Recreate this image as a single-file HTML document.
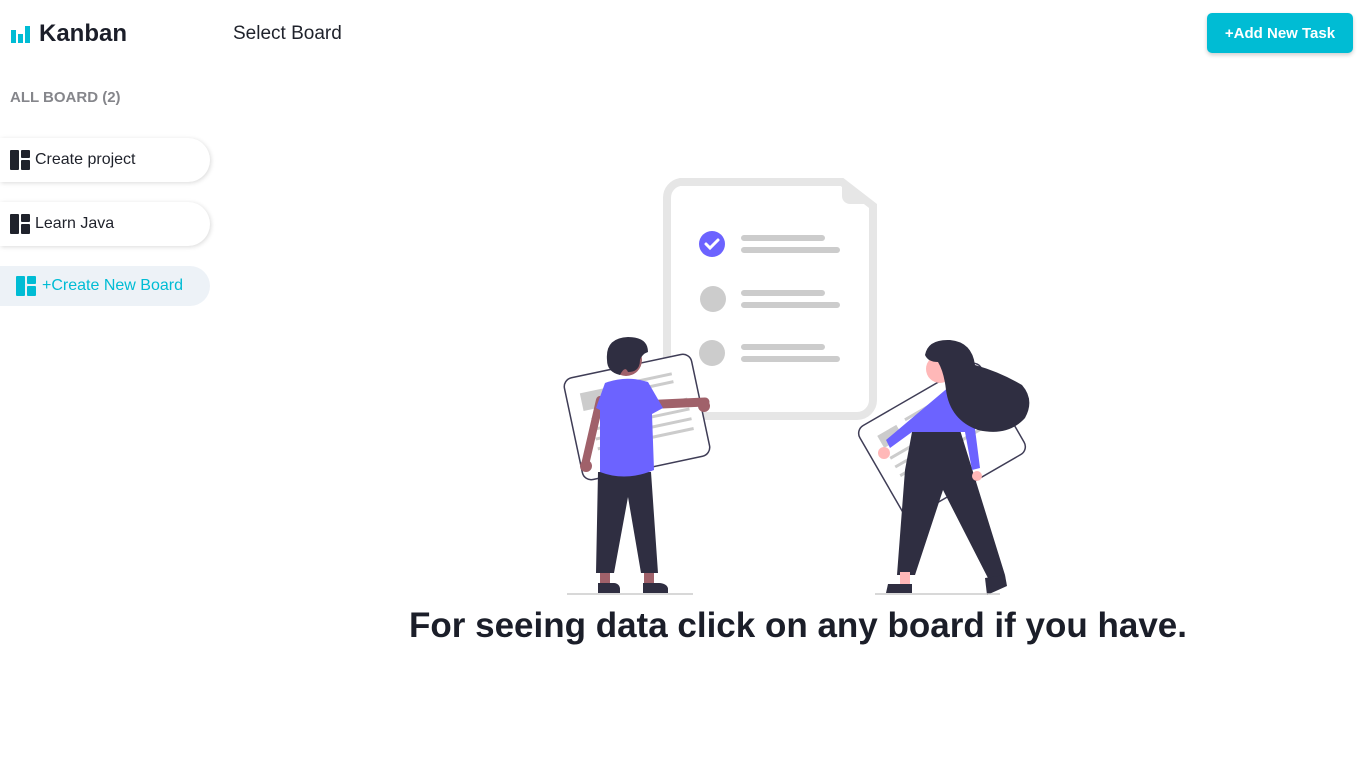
<!DOCTYPE html>
<html><head><meta charset="utf-8"><style>
*{margin:0;padding:0;box-sizing:border-box}
body{width:1366px;height:761px;background:#fff;font-family:"Liberation Sans",sans-serif;position:relative;overflow:hidden;color:#1f222b}
.logo{position:absolute;left:11px;top:20px;display:flex;align-items:center;font-weight:bold;font-size:24px;color:#1b1e29}
.logo svg{margin-right:8px}
.title{position:absolute;left:233px;top:23px;font-size:19px;color:#1f222b}
.btn{position:absolute;left:1207px;top:13px;width:146px;height:40px;background:#00bcd4;border-radius:5px;color:#fff;font-size:15px;font-weight:bold;display:flex;align-items:center;justify-content:center;box-shadow:0 2px 4px rgba(0,0,0,.2)}
.all{position:absolute;left:10px;top:89px;font-size:15px;font-weight:bold;color:#85868b}
.item{position:absolute;left:0;width:210px;height:44px;border-radius:0 22px 22px 0;background:#fff;box-shadow:1px 1px 5px rgba(0,0,0,.15);display:flex;align-items:center;padding-left:10px;font-size:16px;color:#1f222b}
.item svg{margin-right:5px}
.new{position:absolute;left:0;top:266px;width:210px;height:40px;border-radius:0 20px 20px 0;background:#edf2f7;display:flex;align-items:center;padding-left:16px;font-size:16px;color:#00bcd4}
.new svg{margin-right:6px}
.msg{position:absolute;left:0;width:1596px;top:606px;text-align:center;font-size:35px;font-weight:bold;color:#1b1e29}
</style></head><body>
<div class="logo"><svg width="20" height="18" viewBox="0 0 20 18"><rect x="0" y="5" width="5" height="13" fill="#00bcd4"/><rect x="7" y="9" width="5" height="9" fill="#00bcd4"/><rect x="14" y="1" width="5" height="17" fill="#00bcd4"/></svg>Kanban</div>
<div class="title">Select Board</div>
<div class="btn">+Add New Task</div>
<div class="all">ALL BOARD (2)</div>
<div class="item" style="top:138px"><svg width="20" height="20" viewBox="0 0 20 20"><rect x="0" y="0" width="9" height="20" rx="1" fill="#1f222b"/><rect x="11" y="0" width="9" height="8" rx="1" fill="#1f222b"/><rect x="11" y="10" width="9" height="10" rx="1" fill="#1f222b"/></svg>Create project</div>
<div class="item" style="top:202px"><svg width="20" height="20" viewBox="0 0 20 20"><rect x="0" y="0" width="9" height="20" rx="1" fill="#1f222b"/><rect x="11" y="0" width="9" height="8" rx="1" fill="#1f222b"/><rect x="11" y="10" width="9" height="10" rx="1" fill="#1f222b"/></svg>Learn Java</div>
<div class="new"><svg width="20" height="20" viewBox="0 0 20 20"><rect x="0" y="0" width="9" height="20" rx="1" fill="#00bcd4"/><rect x="11" y="0" width="9" height="8" rx="1" fill="#00bcd4"/><rect x="11" y="10" width="9" height="10" rx="1" fill="#00bcd4"/></svg>+Create New Board</div>

<svg style="position:absolute;left:0;top:0" width="1366" height="761" viewBox="0 0 1366 761">
<path d="M680 182 H842 L873 206 V400 a16 16 0 0 1 -16 16 H683 a16 16 0 0 1 -16 -16 V198 a16 16 0 0 1 13 -16Z" fill="#fff" stroke="#e6e6e6" stroke-width="8"/>
<path d="M842 180 V196 a8 8 0 0 0 8 8 H876 Z" fill="#e6e6e6"/>
<circle cx="712" cy="244" r="13" fill="#6c63ff"/>
<path d="M706 244 l4 4 l8 -8" stroke="#fff" stroke-width="3" fill="none" stroke-linecap="round"/>
<circle cx="713" cy="299" r="13" fill="#ccc"/>
<circle cx="712" cy="353" r="13" fill="#ccc"/>
<g stroke="#ccc" stroke-width="6" stroke-linecap="round">
<path d="M744 238 H822 M744 250 H837 M744 293 H822 M744 305 H837 M744 347 H822 M744 359 H837"/>
</g>
<g transform="rotate(-12 637 417)">
<rect x="572" y="365" width="130" height="104" rx="9" fill="#fff" stroke="#3f3d56" stroke-width="1.5"/>
<rect x="586" y="382" width="24" height="18" fill="#ccc"/>
<path d="M620 382 H680 M620 390 H680 M592 410 H690 M592 420 H690 M592 430 H690 M592 440 H690" stroke="#ccc" stroke-width="3"/>
</g>
<path d="M640 405 L705 402" stroke="#a0616a" stroke-width="9" stroke-linecap="round"/>
<circle cx="704" cy="406" r="6" fill="#a0616a"/>
<path d="M600 400 L585 465" stroke="#a0616a" stroke-width="8" stroke-linecap="round"/>
<circle cx="586" cy="466" r="6" fill="#a0616a"/>
<rect x="600" y="570" width="10" height="16" fill="#a0616a"/>
<rect x="644" y="570" width="10" height="16" fill="#a0616a"/>
<path d="M598 472 H651 L658 573 H641 L628 497 L614 573 H596Z" fill="#2f2e41"/>
<path d="M598 583 h16 a6 6 0 0 1 6 6 v4 h-22Z M643 583 h16 a9 6 0 0 1 9 6 v4 h-25Z" fill="#2f2e41"/>
<path d="M605 383 Q626 375 648 382 L663 408 L652 414 L654 470 Q626 482 600 472 L600 410 L596 408Z" fill="#6c63ff"/>
<circle cx="626" cy="360" r="16" fill="#a0616a"/>
<path d="M607 360 Q605 338 628 337 Q648 337 648 352 Q642 354 640 360 Q640 372 628 372 Q625 365 620 375 Q607 372 607 360Z" fill="#2f2e41"/>
<g transform="rotate(-30 942 440)">
<rect x="872" y="388" width="140" height="104" rx="9" fill="#fff" stroke="#3f3d56" stroke-width="1.5"/>
<rect x="888" y="404" width="22" height="14" fill="#ccc"/>
<path d="M920 404 H990 M888 430 H995 M888 440 H995 M888 450 H995" stroke="#ccc" stroke-width="3"/>
</g>
<path d="M960 430 L1005 575 L990 582 L943 490 L915 575 L897 575 L905 470 L912 432Z" fill="#2f2e41"/>
<rect x="900" y="572" width="10" height="14" fill="#ffb8b8"/>
<path d="M888 584 h24 v9 h-26 Z" fill="#2f2e41"/>
<path d="M985 578 L1005 575 L1007 586 L987 595 Z" fill="#2f2e41"/>
<path d="M950 386 L970 390 L980 468 L972 470 L965 432 L912 432 L890 448 L886 440 Z" fill="#6c63ff"/>
<circle cx="884" cy="453" r="6" fill="#ffb8b8"/>
<circle cx="977" cy="476" r="5" fill="#ffb8b8"/>
<circle cx="940" cy="369" r="14" fill="#ffb8b8"/>
<path d="M925 355 Q928 339 950 340 Q972 342 975 365 Q1000 372 1022 385 Q1035 400 1025 418 Q1008 437 978 430 Q950 420 946 390 Q944 372 938 362 Q928 362 925 355Z" fill="#2f2e41"/>
<path d="M567 594 H693 M875 594 H1000" stroke="#ccc" stroke-width="1.5"/>
</svg>
<div class="msg">For seeing data click on any board if you have.</div>
</body></html>
